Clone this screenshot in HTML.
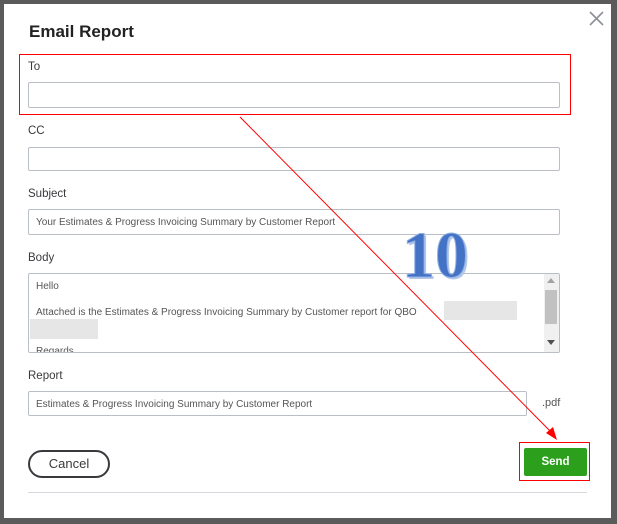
<!DOCTYPE html>
<html><head><meta charset="utf-8"><style>
*{margin:0;padding:0;box-sizing:border-box}
body{width:617px;height:524px;background:#5b5b5b;position:relative;overflow:hidden;font-family:"Liberation Sans",sans-serif;color:#393a3d}
.dlg{position:absolute;left:4px;top:4px;width:607px;height:514px;background:#fff}
.a{position:absolute}
.lbl{font-size:11.5px;color:#393a3d}
.in{position:absolute;left:28px;width:532px;border:1px solid #babec5;border-radius:2px;background:#fff;font-size:10px;color:#555;padding-left:7px}
</style></head><body>
<div class="dlg"></div>
<div class="a" style="left:29px;top:22px;font-size:17px;font-weight:bold;color:#222">Email Report</div>
<svg class="a" style="left:589px;top:11px" width="15" height="15"><path d="M1 1L14 14M14 1L1 14" stroke="#8d9096" stroke-width="1.6"/></svg>
<div class="a" style="left:19px;top:54px;width:552px;height:61px;border:1px solid #f00"></div>
<div class="a lbl" style="left:28px;top:61px">To</div>
<div class="in" style="top:82px;height:26px"></div>
<div class="a lbl" style="left:28px;top:125px">CC</div>
<div class="in" style="top:147px;height:24px"></div>
<div class="a lbl" style="left:28px;top:188px">Subject</div>
<div class="in" style="top:209px;height:26px;line-height:26px">Your Estimates &amp; Progress Invoicing Summary by Customer Report</div>
<div class="a lbl" style="left:28px;top:252px">Body</div>
<div class="in" style="top:273px;height:80px;overflow:hidden;width:532px">
<div style="position:absolute;left:7px;top:7px">Hello</div>
<div style="position:absolute;left:7px;top:33px;white-space:nowrap">Attached is the Estimates &amp; Progress Invoicing Summary by Customer report for QBO</div>
<div style="position:absolute;left:415px;top:27px;width:73px;height:19px;background:#e6e6e6"></div>
<div style="position:absolute;left:1px;top:45px;width:68px;height:20px;background:#e6e6e6"></div>
<div style="position:absolute;left:7px;top:72px">Regards</div>
<div style="position:absolute;right:0;top:0;width:15px;height:78px;background:#f0f0f0">
<div style="position:absolute;left:1px;top:16px;width:12px;height:34px;background:#c1c1c1"></div>
<div style="position:absolute;left:3px;top:4px;width:0;height:0;border:4px solid transparent;border-bottom:5px solid #a3a3a3;border-top:0"></div>
<div style="position:absolute;left:3px;top:66px;width:0;height:0;border:4px solid transparent;border-top:5px solid #505050;border-bottom:0"></div>
</div></div>
<div class="a lbl" style="left:28px;top:370px">Report</div>
<div class="in" style="top:391px;height:25px;width:499px;line-height:25px">Estimates &amp; Progress Invoicing Summary by Customer Report</div>
<div class="a" style="left:542px;top:397px;font-size:11px;color:#555">.pdf</div>
<div class="a" style="left:28px;top:450px;width:82px;height:28px;border:2px solid #393a3d;border-radius:14px;font-size:13px;text-align:center;line-height:24px">Cancel</div>
<div class="a" style="left:519px;top:442px;width:71px;height:39px;border:1px solid #f00"></div>
<div class="a" style="left:524px;top:448px;width:63px;height:28px;background:#2ca01c;border-radius:2px;color:#fff;font-weight:bold;font-size:11.5px;text-align:center;line-height:28px">Send</div>
<div class="a" style="left:28px;top:492px;width:559px;height:1px;background:#d4d7dc"></div>
<div class="a" style="left:402px;top:218px;font-family:'Liberation Serif',serif;font-weight:bold;font-size:66px;color:#4472c4;-webkit-text-stroke:1px #8fb0e6;text-shadow:2px 2px 0 #b4c7e7">10</div>
<svg class="a" style="left:0;top:0" width="617" height="524"><line x1="240" y1="117" x2="553" y2="434" stroke="#f00" stroke-width="1"/><polygon points="557,440 546,433 553,427" fill="#f00"/></svg>
</body></html>
